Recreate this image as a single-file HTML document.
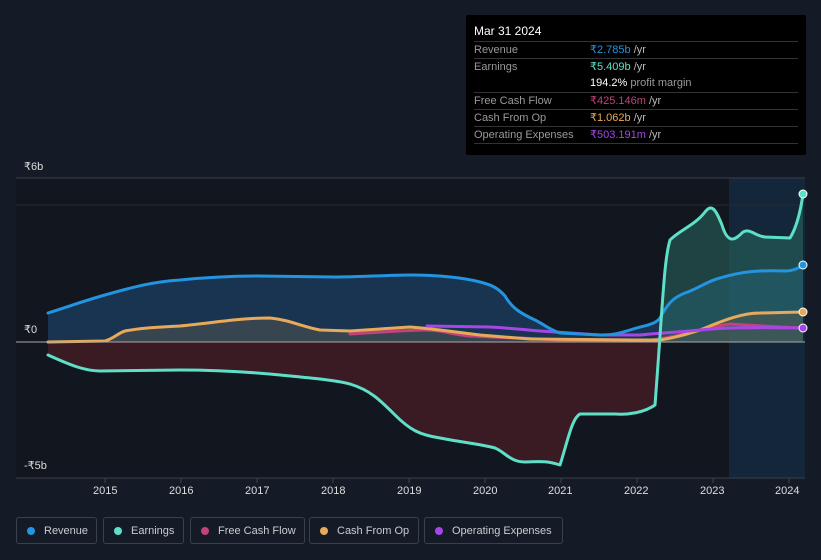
<!DOCTYPE html>
<html><head><meta charset="utf-8"><style>
body{margin:0;background:#151b26;width:821px;height:560px;overflow:hidden;font-family:"Liberation Sans",sans-serif;position:relative}
.tt{position:absolute;left:466px;top:15px;width:340px;height:140px;background:#000;border-radius:2px}
.tt .h{position:absolute;left:8px;top:9px;color:#fff;font-size:12px}
.row{position:absolute;left:8px;width:324px;height:17px;border-top:1px solid #333;font-size:11px;color:#999;line-height:16px;white-space:nowrap}
.row span{position:absolute;left:116px}
.leg{position:absolute;top:517px;height:27px;border:1px solid #3a404c;border-radius:3px;color:#c8ccd2;font-size:11px;line-height:27px;box-sizing:border-box;white-space:nowrap}
.leg i{position:absolute;left:10px;top:9px;width:8px;height:8px;border-radius:50%}
.leg b{font-weight:normal;position:absolute;left:27px}
.ax{position:absolute;color:#ddd;font-size:11px}
</style></head><body>
<svg width="821" height="560" style="position:absolute;left:0;top:0">
<rect x="16" y="178" width="713" height="300" fill="#12161e"/>
<rect x="729" y="178" width="76" height="300" fill="#13263a"/>
<line x1="16" y1="178" x2="805" y2="178" stroke="#3a3f48"/>
<line x1="16" y1="205" x2="805" y2="205" stroke="#262b33"/>
<line x1="16" y1="478" x2="805" y2="478" stroke="#3a3f48"/>
<path d="M48,313 C70,306 90,299 105,295 C130,288 150,282 180,280 C210,277 240,276 258,276 L335,277 C360,277 390,275 410,275 C440,275 465,278 480,282 C492,285 498,288 505,296 C512,308 520,313 535,320 C545,325 550,330 560,333 L600,335 C615,335 620,333 630,330 C645,325 655,325 660,318 C667,305 672,298 685,293 C700,288 705,282 720,278 C740,272 755,270 785,271 C795,271 800,267 803,265 L803,342 L48,342Z" fill="#1d4f7a" opacity="0.55"/>
<path d="M48,355 C70,365 85,371 100,371 L180,370 C220,370 250,372 280,375 C310,378 335,380 350,384 C370,390 380,400 395,415 C410,430 420,435 440,438 C460,442 480,444 495,448 C505,452 510,462 525,462 C535,462 545,460 560,465 C568,440 572,418 580,414 L615,414 C630,415 645,412 655,405 L660,342 L48,342Z" fill="#4a1e25" opacity="0.75"/>
<path d="M660,342 C663,300 664,260 670,240 C680,230 695,225 705,212 C712,203 716,210 722,225 C728,245 735,240 743,232 C750,228 755,236 765,237 L790,238 C795,230 800,215 803,194 L803,342Z" fill="#2a6a60" opacity="0.55"/>
<path d="M105,340 C115,338 118,333 125,331 C145,327 165,327 180,326 C220,322 240,318 270,318 C290,320 300,326 320,330 L350,331 L410,327 L440,330 L480,335 L530,339 L640,340 L660,340 C680,337 690,333 700,330 C720,322 740,313 760,313 L803,312 L803,342 L105,342Z" fill="#5a5a50" opacity="0.45"/>
<g fill="none" stroke-width="3" stroke-linecap="round" stroke-linejoin="round">
<path d="M350,334 C380,332 410,330 430,330 C445,331 455,335 470,336 C490,337 510,338 520,338 L560,340 L640,341 C660,340 670,337 680,335 C700,330 715,326 730,324 C760,326 780,327 803,328" stroke="#c2427a"/>
<path d="M48,342 L105,341 C115,338 118,333 125,331 C145,327 165,327 180,326 C220,322 240,318 270,318 C290,320 300,326 320,330 L350,331 L410,327 C425,328 430,329 440,330 L480,335 L530,339 L640,340 L660,340 C680,337 690,333 700,330 C720,322 740,313 760,313 L803,312" stroke="#e8a95a"/>
<path d="M427,326 L490,327 C510,328 525,330 540,331 L600,335 L640,335 C660,333 680,332 700,330 C720,328 740,327 803,328" stroke="#a646e8"/>
<path d="M48,313 C70,306 90,299 105,295 C130,288 150,282 180,280 C210,277 240,276 258,276 L335,277 C360,277 390,275 410,275 C440,275 465,278 480,282 C492,285 498,288 505,296 C512,308 520,313 535,320 C545,325 550,330 560,333 L600,335 C615,335 620,333 630,330 C645,325 655,325 660,318 C667,305 672,298 685,293 C700,288 705,282 720,278 C740,272 755,270 785,271 C795,271 800,267 803,265" stroke="#2394e0"/>
<path d="M48,355 C70,365 85,371 100,371 L180,370 C220,370 250,372 280,375 C310,378 335,380 350,384 C370,390 380,400 395,415 C410,430 420,435 440,438 C460,442 480,444 495,448 C505,452 510,462 525,462 C535,462 545,460 560,465 C568,440 572,418 580,414 L615,414 C630,415 645,412 655,405 C663,300 664,260 670,240 C680,230 695,225 705,212 C712,203 716,210 722,225 C728,245 735,240 743,232 C750,228 755,236 765,237 L790,238 C795,230 800,215 803,194" stroke="#5ee0c8"/>
</g>
<line x1="16" y1="342" x2="805" y2="342" stroke="#aaa" stroke-width="1"/>
<g stroke="#fff" stroke-width="1">
<circle cx="803" cy="194" r="4" fill="#5ee0c8"/>
<circle cx="803" cy="265" r="4" fill="#2394e0"/>
<circle cx="803" cy="312" r="4" fill="#e8a95a"/>
<circle cx="803" cy="328" r="4" fill="#a646e8"/>
</g>
<g stroke="#444"><line x1="105" y1="478" x2="105" y2="483"/><line x1="181" y1="478" x2="181" y2="483"/><line x1="257" y1="478" x2="257" y2="483"/><line x1="333" y1="478" x2="333" y2="483"/><line x1="409" y1="478" x2="409" y2="483"/><line x1="485" y1="478" x2="485" y2="483"/><line x1="561" y1="478" x2="561" y2="483"/><line x1="637" y1="478" x2="637" y2="483"/><line x1="713" y1="478" x2="713" y2="483"/><line x1="789" y1="478" x2="789" y2="483"/></g>
</svg>
<div class="ax" style="left:24px;top:160px">₹6b</div>
<div class="ax" style="left:24px;top:323px">₹0</div>
<div class="ax" style="left:24px;top:459px">-₹5b</div>
<div class="ax" style="left:93px;top:485px">2015</div>
<div class="ax" style="left:169px;top:485px">2016</div>
<div class="ax" style="left:245px;top:485px">2017</div>
<div class="ax" style="left:321px;top:485px">2018</div>
<div class="ax" style="left:397px;top:485px">2019</div>
<div class="ax" style="left:473px;top:485px">2020</div>
<div class="ax" style="left:548px;top:485px">2021</div>
<div class="ax" style="left:624px;top:485px">2022</div>
<div class="ax" style="left:700px;top:485px">2023</div>
<div class="ax" style="left:775px;top:485px">2024</div>
<div class="tt">
<div class="h">Mar 31 2024</div>
<div class="row" style="top:26px">Revenue<span style="color:#2394e0">₹2.785b <em style="font-style:normal;color:#bbb">/yr</em></span></div>
<div class="row" style="top:43px">Earnings<span style="color:#5ee0c8">₹5.409b <em style="font-style:normal;color:#bbb">/yr</em></span></div>
<div class="row" style="top:60px;border-top:none"><span style="color:#fff">194.2% <em style="font-style:normal;color:#999">profit margin</em></span></div>
<div class="row" style="top:77px">Free Cash Flow<span style="color:#c2427a">₹425.146m <em style="font-style:normal;color:#bbb">/yr</em></span></div>
<div class="row" style="top:94px">Cash From Op<span style="color:#e8a95a">₹1.062b <em style="font-style:normal;color:#bbb">/yr</em></span></div>
<div class="row" style="top:111px">Operating Expenses<span style="color:#a646e8">₹503.191m <em style="font-style:normal;color:#bbb">/yr</em></span></div>
<div class="row" style="top:128px;height:0"></div>
</div>
<div class="leg" style="left:16px;width:81px"><i style="background:#2394e0"></i><b>Revenue</b></div>
<div class="leg" style="left:103px;width:81px"><i style="background:#5ee0c8"></i><b>Earnings</b></div>
<div class="leg" style="left:190px;width:115px"><i style="background:#c2427a"></i><b>Free Cash Flow</b></div>
<div class="leg" style="left:309px;width:110px"><i style="background:#e8a95a"></i><b>Cash From Op</b></div>
<div class="leg" style="left:424px;width:139px"><i style="background:#a646e8"></i><b>Operating Expenses</b></div>
</body></html>
